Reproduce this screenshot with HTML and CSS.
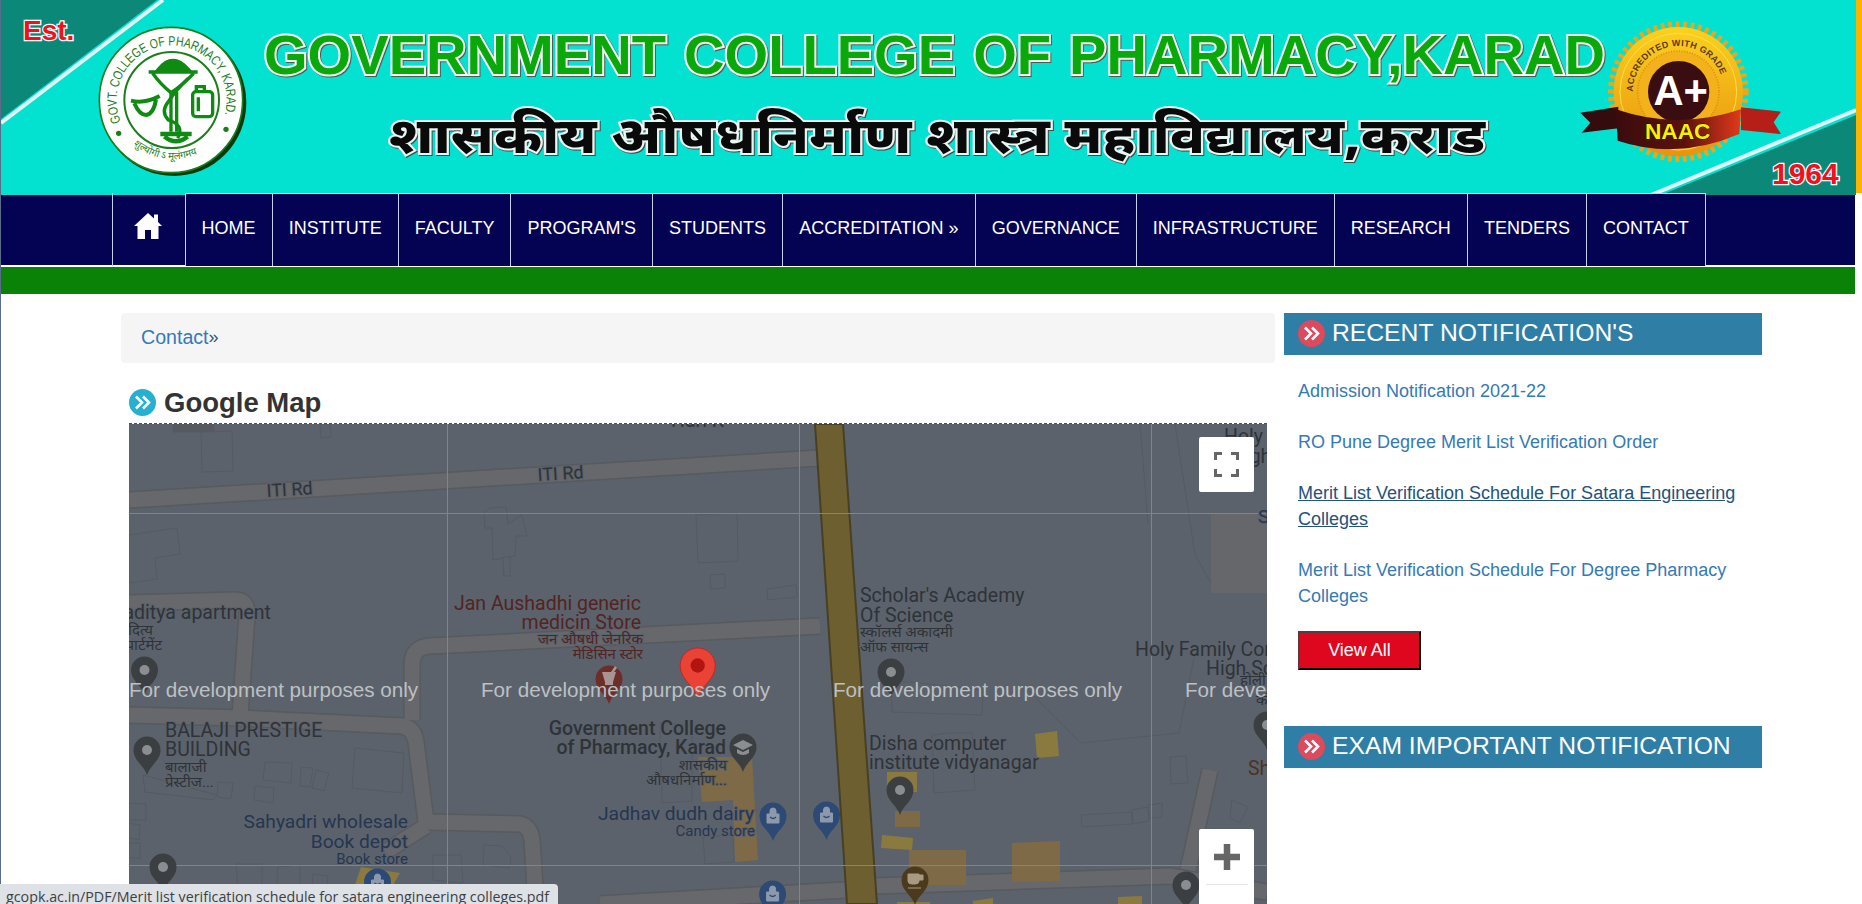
FILE: index.html
```html
<!DOCTYPE html>
<html lang="en">
<head>
<meta charset="utf-8">
<title>Government College of Pharmacy, Karad</title>
<link rel="stylesheet" href="styles.css">
</head>
<body>
<header class="banner">
<svg class="banner-art" viewBox="0 0 1855 195" width="1855" height="195" xmlns="http://www.w3.org/2000/svg">
  <defs>
    <path id="sealArc" d="M120 336 A165 165 0 1 1 432 311"/>
    <path id="sealLow" d="M150 400 Q280 500 410 392"/>
    <path id="naacArc" d="M216 245 A137 137 0 0 1 490 245"/>
    <linearGradient id="goldFill" x1="0" y1="0" x2="0" y2="1"><stop offset="0" stop-color="#fbd11e"/><stop offset="1" stop-color="#e8930e"/></linearGradient>
    <linearGradient id="bandFill" x1="0" y1="0" x2="1" y2="0"><stop offset="0" stop-color="#3a0c0d"/><stop offset=".55" stop-color="#5a120f"/><stop offset="1" stop-color="#e3391a"/></linearGradient>
  </defs>
  <rect width="1855" height="195" fill="#03e2d0"/>
  <polygon points="0,0 156,0 0,119" fill="#0c8879"/>
  <line x1="162" y1="0" x2="0" y2="123" class="banner-stripe"/>
  <polygon points="1855,115 1660,195 1855,195" fill="#0c8879"/>
  <line x1="1855" y1="110" x2="1650" y2="195" class="banner-stripe"/>
  <text x="22" y="40" class="banner-red est">Est.</text>
  <text x="1771" y="184" class="banner-red year">1964</text>

  <g transform="translate(80 10) scale(.3333)">
    <ellipse cx="278" cy="278" rx="218" ry="220" fill="#0a3a0a"/>
    <ellipse cx="270" cy="270" rx="215" ry="218" fill="#fff" stroke="#1b7d1b" stroke-width="5"/>
    <ellipse cx="272" cy="270" rx="142" ry="144" fill="none" stroke="#1b7d1b" stroke-width="6"/>
    <text class="seal-text"><textPath href="#sealArc" textLength="627" lengthAdjust="spacingAndGlyphs">GOVT. COLLEGE OF PHARMACY, KARAD.</textPath></text>
    <text class="seal-low"><textPath href="#sealLow" startOffset="3%">शुल्योगी ऽ मूलंगमय</textPath></text>
    <circle cx="113" cy="370" r="8" fill="#1b7d1b"/><circle cx="435" cy="358" r="8" fill="#1b7d1b"/>
    <g fill="none" stroke="#0f8a12" stroke-width="10">
      <path d="M232 178 Q275 125 322 178Z" fill="#0f8a12"/>
      <path d="M203 186 H350 M215 190 Q240 225 270 248 Q305 225 338 190"/>
      <path d="M270 245 V365 M287 245 V365"/>
      <path d="M238 372 H332 M250 380 Q285 408 320 380" stroke-width="13"/>
      <path d="M322 205 Q285 240 262 275 Q238 305 262 330 Q312 345 290 385"/>
      <path d="M150 272 Q190 282 236 258 M160 280 Q175 315 195 315 Q218 312 225 268" stroke-width="12"/>
      <rect x="335" y="245" width="60" height="75" rx="10"/>
      <path d="M346 244 V230 H370 V244 M352 262 V304"/>
    </g>
  </g>

  <text x="263" y="74" textLength="1341" lengthAdjust="spacingAndGlyphs" class="title-en">GOVERNMENT COLLEGE OF PHARMACY,KARAD</text>
  <text x="388" y="153" textLength="1096" lengthAdjust="spacingAndGlyphs" class="title-mr">शासकीय औषधनिर्माण शास्त्र महाविद्यालय,कराड</text>

  <g transform="translate(1560 10) scale(.3333)">
    <circle cx="352" cy="245" r="198" fill="none" stroke="#f2a514" stroke-width="26" stroke-dasharray="11 11"/>
    <circle cx="352" cy="245" r="194" fill="url(#goldFill)"/>
    <circle cx="352" cy="245" r="175" fill="none" stroke="#f7e04a" stroke-width="3"/>
    <circle cx="352" cy="245" r="122" fill="#f3b21b" stroke="#e08a10" stroke-width="5" stroke-dasharray="3 5"/>
    <text class="naac-arc"><textPath href="#naacArc">ACCREDITED WITH GRADE</textPath></text>
    <circle cx="353" cy="245" r="92" fill="#3a0d10"/>
    <text x="359" y="285" class="naac-grade">A+</text>
    <polygon points="58,308 172,290 172,355 62,368 88,338" fill="#340c0d"/>
    <polygon points="540,292 660,305 638,337 660,372 540,360" fill="#b61e18"/>
    <path d="M165 298 Q350 362 540 298 L535 372 Q350 452 170 392Z" fill="url(#bandFill)"/>
    <text x="350" y="388" class="naac-name">NAAC</text>
  </g>
</svg>
<span class="banner-edge"></span>
</header>

<nav class="navbar">
  <ul class="nav-list">
    <li class="nav-item nav-home"><a href="#" aria-label="Home"><svg class="home-icon" viewBox="0 0 28 26" width="28" height="26" xmlns="http://www.w3.org/2000/svg"><path d="M14 0 L20 5.5 V1.500 H24 V9 L28 13 H24.500 V26 H17 V17 H11 V26 H3.500 V13 H0Z"/></svg></a></li>
    <li class="nav-item"><a href="#">HOME</a></li>
    <li class="nav-item"><a href="#">INSTITUTE</a></li>
    <li class="nav-item"><a href="#">FACULTY</a></li>
    <li class="nav-item"><a href="#">PROGRAM'S</a></li>
    <li class="nav-item"><a href="#">STUDENTS</a></li>
    <li class="nav-item"><a href="#">ACCREDITATION »</a></li>
    <li class="nav-item"><a href="#">GOVERNANCE</a></li>
    <li class="nav-item"><a href="#">INFRASTRUCTURE</a></li>
    <li class="nav-item"><a href="#">RESEARCH</a></li>
    <li class="nav-item"><a href="#">TENDERS</a></li>
    <li class="nav-item nav-last"><a href="#">CONTACT</a></li>
  </ul>
</nav>
<div class="green-bar"></div>

<div class="content">
  <main class="main-col">
    <div class="breadcrumb"><a href="#">Contact</a><span class="crumb-sep">»</span></div>
    <h2 class="map-title">
      <svg class="bullet bullet-blue" viewBox="0 0 27 27" width="27" height="27" xmlns="http://www.w3.org/2000/svg"><circle cx="13.500" cy="13.500" r="13.500"/><path d="M7 7.500 L13 13.500 L7 19.500 M14 7.500 L20 13.500 L14 19.500"/></svg>
      Google Map
    </h2>
    <div class="map">
      <svg class="map-art" viewBox="129 424 1138 480" width="1138" height="480" xmlns="http://www.w3.org/2000/svg">
        <defs>
          <path id="pin" d="M0 0 C-3 -10 -13.500 -14 -13.500 -25 A13.500 13.500 0 1 1 13.500 -25 C13.500 -14 3 -10 0 0Z"/>
          <g id="pinDot"><use href="#pin"/><circle cx="0" cy="-25" r="5" class="pin-dot"/></g>
          <g id="pinBag"><use href="#pin"/><path d="M-6 -27 H6 V-18 H-6Z M-3 -27 V-30 A3 3 0 0 1 3 -30 V-27" class="pin-bag"/><path d="M-3 -24 Q0 -21 3 -24" class="pin-smile"/></g>
        </defs>
        <rect x="129" y="424" width="1138" height="480" fill="#5b626c"/>
        <g class="blds">
          <polygon points="173,424 214,424 214,432 173,432" class="bld-dark"/>
          <polygon points="201,432 232,431 233,471 202,472"/>
          <polygon points="320,424 330,424 331,437 321,438"/>
          <polygon points="129,535 177,528 180,554 155,558 157,579 129,583"/>
          <polygon points="490,508 506,507 508,524 522,515 527,536 516,536 515,556 493,560 492,528 485,528 484,512"/>
          <polygon points="503,557 510,557 510,576 504,576"/>
          <polygon points="696,515 737,513 738,561 698,563"/>
          <polygon points="710,575 725,574 725,588 711,589"/>
          <polygon points="767,589 796,585 797,597 768,600"/>
          <polygon points="891,680 983,690 982,715 892,712"/>
          <polygon points="932,735 950,733 955,733 972,733 975,790 934,793"/>
          <polygon points="1170,757 1186,756 1188,783 1171,784"/>
          <polygon points="1081,815 1132,812 1132,824 1082,827"/>
          <polygon points="1132,810 1148,807 1149,821 1133,824"/>
          <polygon points="1148,805 1162,803 1162,817 1150,818"/>
          <polygon points="1232,800 1248,807 1240,823 1230,818"/>
          <polygon points="355,748 404,753 402,793 352,788"/>
          <polygon points="265,762 292,763 291,783 263,780"/>
          <polygon points="301,767 313,768 310,787 300,786"/>
          <polygon points="316,770 329,773 324,791 312,788"/>
          <polygon points="255,786 274,788 273,803 254,800"/>
          <polygon points="218,782 233,783 231,799 217,797"/>
          <polygon points="143,775 217,795 213,800 145,792"/>
          <polygon points="484,845 502,846 511,857 510,868 483,865"/>
          <polygon points="433,855 461,855 463,883 433,880"/>
          <polygon points="236,864 262,864 262,890 238,890"/>
          <polygon points="278,867 300,865 300,892 276,892"/>
          <polygon points="313,874 328,876 326,892 312,892"/>
          <polygon points="660,723 692,725 692,801 662,803"/>
          <polygon points="703,837 733,835 734,862 705,864"/>
          <polygon points="129,803 146,804 146,820 129,820"/>
          <polygon points="129,823 140,825 139,840 129,838"/>
          <polygon points="129,843 140,843 140,858 129,858"/>
        </g>
        <path d="M1028 690 L1081 743 L1179 733 L1195 653 M1140 424 L1148 524 M1175 424 L1195 555 L1215 590" class="thin"/>
        <g class="road-edge">
          <path d="M129 500 L820 458"/>
          <path d="M820 626 L430 646 Q412 647 412 665 L412 720"/>
          <path d="M129 603 L235 600 Q248 600 247 615 L240 716 M129 715 L240 718 L402 726 Q414 728 416 742 L426 822 L520 824 Q530 826 532 840 L536 904 M426 826 L385 852"/>
          <path d="M600 904 L845 890 M875 886 L1170 876 L1267 892"/>
          <path d="M1210 770 L1188 870"/>
        </g>
        <g class="road-fill">
          <path d="M129 500 L820 458"/>
          <path d="M820 626 L430 646 Q412 647 412 665 L412 720"/>
          <path d="M129 603 L235 600 Q248 600 247 615 L240 716 M129 715 L240 718 L402 726 Q414 728 416 742 L426 822 L520 824 Q530 826 532 840 L536 904 M426 826 L385 852"/>
          <path d="M600 904 L845 890 M875 886 L1170 876 L1267 892"/>
          <path d="M1210 770 L1188 870"/>
        </g>
        <rect x="1211" y="513" width="56" height="80" fill="#66676a"/>
        <g class="gold">
          <polygon points="1035,734 1057,731 1059,756 1037,758"/>
          <polygon points="887,772 917,772 917,792 887,792"/>
          <polygon points="882,835 913,838 912,850 881,848"/>
          <polygon points="361,867 400,873 392,887 355,885"/>
          <polygon points="1118,897 1142,896 1142,904 1118,904"/>
          <polygon points="973,901 993,898 993,904 973,904"/>
          <polygon points="897,902 930,902 930,904 897,904"/>
        </g>
        <g class="brown">
          <polygon points="895,811 920,811 920,827 895,827"/>
          <polygon points="909,850 966,850 966,885 909,885"/>
          <polygon points="1012,843 1060,841 1060,881 1012,882"/>
          <polygon points="698,757 752,757 758,860 735,862 733,800 702,802"/>
        </g>
        <polygon points="815,424 843,424 877,904 847,904" class="highway"/>

        <line x1="447" y1="424" x2="447" y2="904" class="grid"/>
        <line x1="799" y1="424" x2="799" y2="904" class="grid"/>
        <line x1="1151" y1="424" x2="1151" y2="904" class="grid"/>
        <line x1="129" y1="513" x2="1267" y2="513" class="grid"/>
        <line x1="129" y1="865" x2="1267" y2="865" class="grid"/>

        <text x="267" y="497" transform="rotate(-3.500 267 497)" class="lr">ITI Rd</text>
        <text x="538" y="481" transform="rotate(-3.500 538 481)" class="lr">ITI Rd</text>
        <text x="671" y="427" class="lb">Hari K</text>
        <text x="271" y="619" class="lb end">Aaditya apartment</text>
        <text x="153" y="635" class="ls end">आदित्य</text>
        <text x="162" y="650" class="ls end">अपार्टमेंट</text>
        <text x="165" y="737" class="lb">BALAJI PRESTIGE</text>
        <text x="165" y="756" class="lb">BUILDING</text>
        <text x="165" y="772" class="ls">बालाजी</text>
        <text x="165" y="787" class="ls">प्रेस्टीज...</text>
        <text x="408" y="828" class="lb end blue">Sahyadri wholesale</text>
        <text x="408" y="848" class="lb end blue">Book depot</text>
        <text x="408" y="864" class="ls end blue">Book store</text>
        <text x="641" y="610" class="lb end red">Jan Aushadhi generic</text>
        <text x="641" y="629" class="lb end red">medicin Store</text>
        <text x="643" y="644" class="ls end red">जन औषधी जेनरिक</text>
        <text x="643" y="659" class="ls end red">मेडिसिन स्टोर</text>
        <text x="726" y="735" class="lb end strong">Government College</text>
        <text x="726" y="754" class="lb end strong">of Pharmacy, Karad</text>
        <text x="727" y="770" class="ls end">शासकीय</text>
        <text x="727" y="785" class="ls end">औषधनिर्माण...</text>
        <text x="754" y="820" class="lb end blue">Jadhav dudh dairy</text>
        <text x="755" y="836" class="ls end blue">Candy store</text>
        <text x="860" y="602" class="lb">Scholar's Academy</text>
        <text x="860" y="622" class="lb">Of Science</text>
        <text x="860" y="637" class="ls">स्कॉलर्स अकादमी</text>
        <text x="860" y="652" class="ls">ऑफ सायन्स</text>
        <text x="869" y="750" class="lb">Disha computer</text>
        <text x="869" y="769" class="lb">institute vidyanagar</text>
        <text x="1135" y="656" class="lb">Holy Family Convent</text>
        <text x="1206" y="675" class="lb">High School</text>
        <text x="1240" y="685" class="ls">होली</text>
        <text x="1256" y="705" class="ls">कॉ</text>
        <text x="1224" y="443" class="lb">Holy</text>
        <text x="1231" y="463" class="lb">High</text>
        <text x="1258" y="523" class="lb blue">S</text>
        <text x="1248" y="775" class="lb umber">Sh</text>

        <use href="#pinDot" x="144.500" y="695" class="pin-dark"/>
        <use href="#pinDot" x="147" y="775" class="pin-dark"/>
        <use href="#pinDot" x="163" y="892" class="pin-dark"/>
        <use href="#pinDot" x="891" y="697" class="pin-dark"/>
        <use href="#pinDot" x="900" y="815" class="pin-dark"/>
        <use href="#pinDot" x="1186" y="910" class="pin-dark"/>
        <use href="#pinDot" x="1267" y="750" class="pin-dark"/>
        <use href="#pinBag" x="773" y="841" class="pin-blue"/>
        <use href="#pinBag" x="826.500" y="840" class="pin-blue"/>
        <use href="#pinBag" x="772.600" y="919" class="pin-blue"/>
        <use href="#pinBag" x="377.500" y="907" class="pin-blue"/>
        <g transform="translate(609 704)"><use href="#pin" class="pin-med"/><path d="M-7 -32 H7 L4 -22 V-19 H-4 V-22Z M2 -32 L6 -38 L8 -36 L5 -32" class="pin-mortar"/></g>
        <g transform="translate(743 772)"><use href="#pin" class="pin-dark"/><path d="M-10 -27 L0 -32 L10 -27 L0 -22Z M-6 -23 V-19 Q0 -15 6 -19 V-23 L0 -20Z" class="pin-cap"/></g>
        <g transform="translate(915 905)"><use href="#pin" class="pin-food"/><path d="M-7 -31 H4 V-24 Q4 -21 0 -21 H-3 Q-7 -21 -7 -24Z M4 -30 H8 V-25 H4 M-7 -17 H6" class="pin-cup"/></g>
        <g transform="translate(697.700 698) scale(1.300)"><use href="#pin" class="pin-red"/><circle cx="0" cy="-25" r="5.500" class="pin-core"/></g>

        <text x="129" y="697" class="dev">For development purposes only</text>
        <text x="481" y="697" class="dev">For development purposes only</text>
        <text x="833" y="697" class="dev">For development purposes only</text>
        <text x="1185" y="697" class="dev">For development purposes only</text>
      </svg>
      <button class="map-ctl map-full" aria-label="Toggle fullscreen view"><svg viewBox="0 0 25 25" width="25" height="25" xmlns="http://www.w3.org/2000/svg"><path d="M1.500 8 V1.500 H8 M17 1.500 H23.500 V8 M23.500 17 V23.500 H17 M8 23.500 H1.500 V17"/></svg></button>
      <div class="map-ctl map-zoom">
        <button class="zoom-btn" aria-label="Zoom in"><svg viewBox="0 0 26 26" width="26" height="26" xmlns="http://www.w3.org/2000/svg"><path d="M13 0 V26 M0 13 H26"/></svg></button>
        <span class="zoom-sep"></span>
      </div>
    </div>
  </main>

  <aside class="side-col">
    <section class="panel">
      <h3 class="panel-head">
        <svg class="bullet bullet-red" viewBox="0 0 27 27" width="27" height="27" xmlns="http://www.w3.org/2000/svg"><circle cx="13.500" cy="13.500" r="13.500"/><path d="M7 7.500 L13 13.500 L7 19.500 M14 7.500 L20 13.500 L14 19.500"/></svg>
        RECENT NOTIFICATION'S
      </h3>
      <ul class="notes">
        <li><a href="#">Admission Notification 2021-22</a></li>
        <li><a href="#">RO Pune Degree Merit List Verification Order</a></li>
        <li><a href="#" class="hovered">Merit List Verification Schedule For Satara Engineering Colleges</a></li>
        <li><a href="#">Merit List Verification Schedule For Degree Pharmacy Colleges</a></li>
      </ul>
      <button class="view-all">View All</button>
    </section>
    <section class="panel">
      <h3 class="panel-head">
        <svg class="bullet bullet-red" viewBox="0 0 27 27" width="27" height="27" xmlns="http://www.w3.org/2000/svg"><circle cx="13.500" cy="13.500" r="13.500"/><path d="M7 7.500 L13 13.500 L7 19.500 M14 7.500 L20 13.500 L14 19.500"/></svg>
        EXAM IMPORTANT NOTIFICATION
      </h3>
    </section>
  </aside>
</div>

<div class="status-bubble">gcopk.ac.in/PDF/Merit list verification schedule for satara engineering colleges.pdf</div>
</body>
</html>
```

FILE: styles.css
```css
* { box-sizing: border-box; }
html, body { margin: 0; padding: 0; height: 904px; overflow: hidden; background: #fff; }
body {
  border-left: 1px solid #5b6b8b;
  font-family: "Liberation Sans", Arial, sans-serif;
  font-size: 18px;
  color: #333;
  position: relative;
}
a { color: #337ab7; text-decoration: none; }

/* banner */
.banner { display: flex; height: 195px; }
.banner-art { display: block; flex: none; }
.banner-edge { width: 6px; height: 193px; background: #fdb300; }
.banner-stripe { stroke: #dff8f7; stroke-width: 4; }
.banner-red {
  font-family: "Liberation Sans", Arial, sans-serif;
  font-weight: 700;
  fill: #f0101e;
  stroke: #fff;
  stroke-width: 2.500;
  paint-order: stroke;
}
.est { font-size: 28px; }
.year { font-size: 30px; }
.title-en {
  font-family: "Liberation Sans", Arial, sans-serif;
  font-weight: 700;
  font-size: 56px;
  word-spacing: 2.500px;
  fill: #0aa80a;
  stroke: #f2fbf6;
  stroke-width: 4;
  paint-order: stroke;
  filter: drop-shadow(1px 1px 0.5px #4b5a55);
}
.title-mr {
  font-family: "Noto Sans", "Noto Sans Devanagari", "Lohit Devanagari", sans-serif;
  font-weight: 800;
  font-size: 50px;
  fill: #0a0a0a;
  stroke: #e9f6f4;
  stroke-width: 4;
  paint-order: stroke;
  filter: drop-shadow(1px 1px 0.5px #3d4a48);
}
.seal-text { font-family: "Liberation Sans", Arial, sans-serif; font-size: 40px; fill: #1b7d1b; }
.seal-low { font-family: "Noto Sans", sans-serif; font-size: 30px; fill: #1b7d1b; }
.naac-arc { font-family: "Liberation Sans", Arial, sans-serif; font-weight: 700; font-size: 27px; fill: #5e3a10; letter-spacing: 1px; }
.naac-grade { font-family: "Liberation Sans", Arial, sans-serif; font-weight: 700; font-size: 125px; fill: #fff; text-anchor: middle; }
.naac-name { font-family: "Liberation Sans", Arial, sans-serif; font-weight: 700; font-size: 68px; fill: #f8f000; text-anchor: middle; stroke: #2a0808; stroke-width: 3; paint-order: stroke; }

/* nav */
.navbar { display: flow-root; width: 1854px; height: 72px; background: #040253; border-bottom: 2px solid #fff; }
.nav-list { display: flex; list-style: none; margin: -2px 0 0 110.500px; padding: 0; height: 73px; }
.nav-item { display: flex; border-left: 1px solid #c8d0e4; border-top: 1px solid #c8d0e4; background: #040253; }
.nav-item a { display: flex; align-items: center; padding: 0 16.050px 3px; color: #fff; font-size: 18px; white-space: nowrap; }
.nav-home { border-top: 0; background: transparent; }
.nav-home a { padding: 0 23px 8px 21px; }
.nav-last { border-right: 1px solid #c8d0e4; }
.home-icon { fill: #fff; display: block; }
.green-bar { width: 1854px; height: 27px; background: #0a8207; }

/* layout */
.content { display: flex; gap: 9px; padding: 19px 0 0 120px; align-items: flex-start; }
.main-col { width: 1154px; flex: none; }
.side-col { width: 478px; flex: none; }

.breadcrumb { height: 50px; padding: 0 20px 1px; background: #f5f5f5; border-radius: 4px; display: flex; align-items: center; font-size: 19.600px; }
.crumb-sep { color: #2d5a88; font-size: 18px; }

.map-title { display: flex; align-items: center; gap: 8px; margin: 25px 0 6px 8px; height: 29px; font-size: 27.500px; font-weight: 700; color: #333; }
.bullet { display: block; flex: none; }
.bullet path { fill: none; stroke: #fff; stroke-width: 2.600; }
.bullet-blue circle { fill: #25b0d2; }
.bullet-red circle { fill: #dc4a5e; }

/* map */
.map { position: relative; margin-left: 8px; width: 1138px; height: 481px; border-top: 1px dashed #4d5157; overflow: hidden; }
.map-art { display: block; }
.blds polygon { fill: #5b626c; stroke: #555b63; stroke-width: 1; }
.blds .bld-dark { fill: #565a60; }
.thin { fill: none; stroke: #555b63; stroke-width: 1; }
.road-edge path { fill: none; stroke: #575a5e; stroke-width: 18; }
.road-fill path { fill: none; stroke: #67686b; stroke-width: 15; }
.gold polygon { fill: #8b7a3f; }
.brown polygon { fill: #7f6a48; }
.highway { fill: #6e5f31; stroke: #474024; stroke-width: 2; }
.grid { stroke: #81858a; stroke-width: 1; shape-rendering: crispEdges; }

.map-art text { font-family: Roboto, "Noto Sans", sans-serif; fill: #2f3338; stroke: #5b626c; stroke-width: 2; paint-order: stroke; }
.map-art .lb { font-size: 19.500px; }
.map-art .lb.blue { font-size: 19.200px; }
.map-art .lr { font-size: 18px; }
.map-art .ls { font-size: 15px; }
.map-art .end { text-anchor: end; }
.map-art .strong { font-weight: 500; }
.map-art .blue { fill: #263650; }
.map-art .red { fill: #522422; }
.map-art .umber { fill: #4b3325; }
.map-art .dev { font-family: "Liberation Sans", Arial, sans-serif; font-size: 20.650px; fill: #bdc0c3; stroke: none; }

.pin-dark { fill: #3c3f42; }
.pin-blue { fill: #2d4a74; }
.pin-med { fill: #6c2e29; }
.pin-food { fill: #4c3a1e; }
.pin-red { fill: #ea4335; stroke: #c5221f; stroke-width: .7; }
.pin-core { fill: #b31412; }
.pin-dot { fill: #8b8e91; }
.pin-bag { fill: #8c99ad; stroke: #8c99ad; stroke-width: 1; fill-opacity: 1; }
.pin-smile { fill: none; stroke: #2d4a74; stroke-width: 1.200; }
.pin-mortar { fill: #a89492; stroke: none; }
.pin-cap { fill: #8b8e91; }
.pin-cup { fill: #a89a80; stroke: #a89a80; stroke-width: 1; }

.map-ctl { position: absolute; left: 1070px; width: 55px; background: #fff; border: 0; padding: 0; border-radius: 2px; }
.map-full { top: 13px; height: 55px; display: flex; align-items: center; justify-content: center; }
.map-full path { fill: none; stroke: #666; stroke-width: 3; }
.map-zoom { top: 405px; height: 100px; display: flex; flex-direction: column; align-items: center; }
.zoom-btn { border: 0; background: none; padding: 15px 0 0; height: 55px; width: 55px; display: flex; justify-content: center; }
.zoom-btn path { fill: none; stroke: #666; stroke-width: 6.500; }
.zoom-sep { display: block; width: 42px; height: 1px; background: #e6e6e6; }

/* side */
.panel-head { display: flex; align-items: center; gap: 7px; height: 42px; margin: 0; padding: 0 14px 2px; background: #2f7ea5; color: #fff; font-size: 24.700px; font-weight: 400; }
.notes { list-style: none; margin: 0; padding: 23px 14px 0; font-size: 18px; line-height: 26px; }
.notes li { margin-bottom: 25px; }
.hovered { color: #23527c; text-decoration: underline; }
.view-all {
  display: block;
  margin: -3px 0 56px 14px;
  width: 123px;
  height: 39px;
  padding: 0;
  background: #df071e;
  border: 2px solid;
  border-color: #5e3a3e #000 #000 #5e3a3e;
  color: #fff;
  font-family: "Liberation Sans", Arial, sans-serif;
  font-size: 18px;
}

/* link-preview status */
.status-bubble {
  position: fixed;
  left: 0;
  bottom: 0;
  width: 558px;
  height: 20px;
  padding: 3px 0 0 6px;
  background: #dee1e6;
  border-top-right-radius: 4px;
  color: #3c4043;
  font-family: "Open Sans", sans-serif;
  font-size: 14.270px;
  line-height: 20px;
  white-space: nowrap;
  overflow: hidden;
}
```
